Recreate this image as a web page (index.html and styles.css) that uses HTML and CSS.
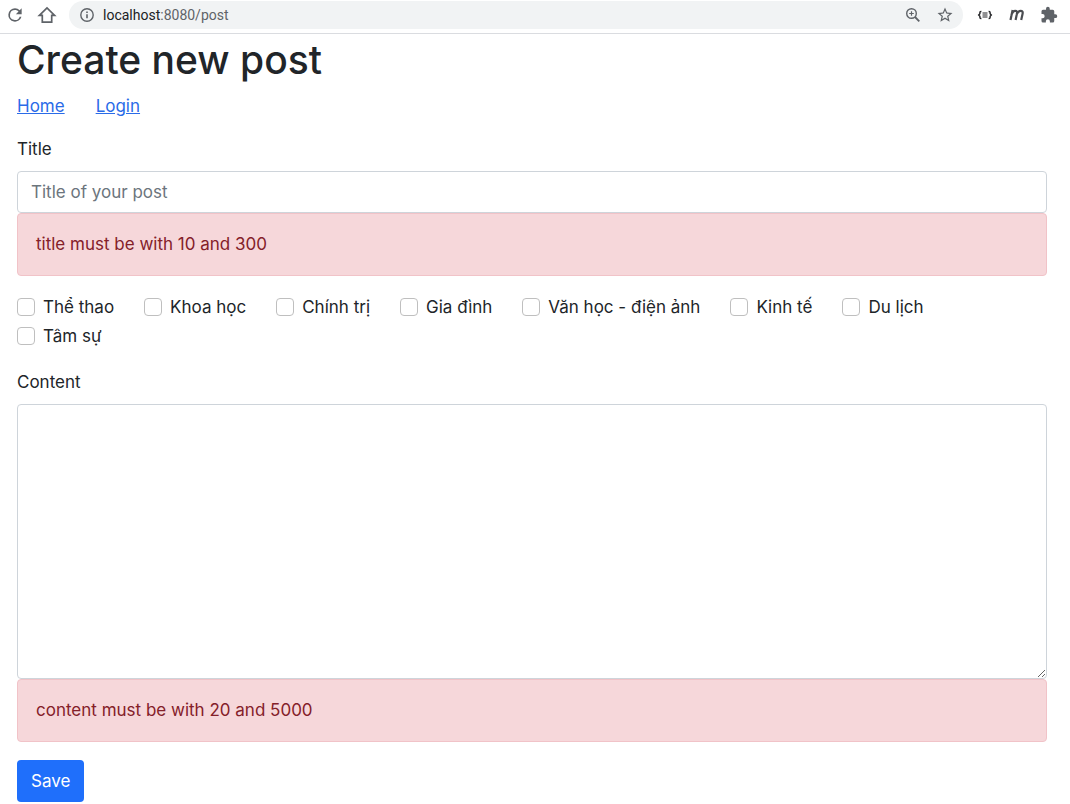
FILE: index.html
```html
<!DOCTYPE html>
<html lang="en">
<head>
<meta charset="utf-8">
<meta name="viewport" content="width=device-width, initial-scale=1">
<title>Create new post</title>
<link rel="stylesheet" href="styles.css">
</head>
<body>
<header class="toolbar">
  <button class="tool" type="button" aria-label="Reload">
    <svg width="20" height="20" viewBox="0 0 24 24" fill="#5f6368"><path d="M17.65 6.35A7.96 7.96 0 0 0 12 4a8 8 0 1 0 7.73 10h-2.08A6 6 0 1 1 12 6c1.66 0 3.14.69 4.22 1.78L13 11h7V4z"/></svg>
  </button>
  <button class="tool" type="button" aria-label="Home page">
    <svg width="20" height="20" viewBox="0 0 20 20" fill="none" stroke="#5f6368" stroke-width="1.7"><path d="M2.4 10.4 10 2.9l7.6 7.5h-2.9v6.7H5.3v-6.7z"/></svg>
  </button>
  <div class="address">
    <svg width="16" height="16" viewBox="0 0 16 16" fill="none" stroke="#5f6368" stroke-width="1.4"><circle cx="8" cy="8" r="6.2"/><path d="M8 7.2v4M8 4.5v1.4" stroke-width="1.6"/></svg>
    <span class="url">localhost<span class="url-path">:8080/post</span></span>
    <button class="tool" type="button" aria-label="Zoom">
      <svg width="18" height="18" viewBox="0 0 18 18" fill="none" stroke="#5f6368" stroke-width="1.4"><circle cx="7.5" cy="7.5" r="4.8"/><path d="m11 11 4.300 4.300" stroke-width="1.8"/><path d="M7.500 5.200v4.600M5.200 7.500h4.600" stroke-width="1.2"/></svg>
    </button>
    <button class="tool" type="button" aria-label="Bookmark this page">
      <svg width="18" height="18" viewBox="0 0 24 24" fill="#5f6368"><path d="m22 9.240-7.190-.62L12 2 9.190 8.630 2 9.240l5.460 4.730L5.820 21 12 17.270 18.180 21l-1.630-7.030zM12 15.400l-3.760 2.270 1-4.280-3.320-2.880 4.380-.38L12 6.100l1.710 4.040 4.380.38-3.320 2.880 1 4.280z"/></svg>
    </button>
  </div>
  <button class="tool" type="button" aria-label="JSON viewer">
    <svg width="16" height="16" viewBox="0 0 16 16" fill="none" stroke="#202124" stroke-width="1.4"><path d="M4.400 4.500H3.900Q2.900 4.500 2.900 5.500v1.300L1.700 8l1.200 1.200v1.300q0 1 1 1h.5M11.600 4.500h.5q1 0 1 1v1.300L14.300 8l-1.200 1.200v1.300q0 1-1 1h-.5"/><path d="M5.500 6h5M5.500 8h5M5.500 10h5" stroke-width="1"/></svg>
  </button>
  <button class="tool" type="button" aria-label="Extension m">
    <svg width="18" height="18" viewBox="0 0 18 18" fill="none" stroke="#4a4d51" stroke-width="2.200"><path d="M2.500 14 4.600 4M3.300 9.500C4.200 6.300 5.600 4.800 7.200 4.800c1.700 0 2.100 1.100 1.700 2.900L7.600 14M8.700 8.500c.9-2.500 2.200-3.700 3.900-3.700 1.800 0 2.400 1.100 2 2.900L13.200 14"/></svg>
  </button>
  <button class="tool" type="button" aria-label="Extensions">
    <svg width="18" height="18" viewBox="0 0 24 24" fill="#5f6368"><path d="M20.500 11H19V7a2 2 0 0 0-2-2h-4V3.500a2.500 2.500 0 0 0-5 0V5H4a2 2 0 0 0-2 2v3.800h1.500a2.700 2.700 0 0 1 0 5.400H2V20a2 2 0 0 0 2 2h3.800v-1.500a2.700 2.700 0 0 1 5.400 0V22H17a2 2 0 0 0 2-2v-4h1.500a2.500 2.500 0 0 0 0-5z"/></svg>
  </button>
</header>
<main class="page">
  <h1 class="heading">Create new post</h1>
  <nav class="nav"><a href="#home">Home</a><a href="#login">Login</a></nav>
  <form class="form">
    <div class="field">
      <label class="label" for="title">Title</label>
      <input class="control" id="title" type="text" placeholder="Title of your post">
      <div class="alert" role="alert">title must be with 10 and 300</div>
    </div>
    <div class="checks">
      <label class="check"><input type="checkbox">Thể thao</label>
      <label class="check"><input type="checkbox">Khoa học</label>
      <label class="check"><input type="checkbox">Chính trị</label>
      <label class="check"><input type="checkbox">Gia đình</label>
      <label class="check"><input type="checkbox">Văn học - điện ảnh</label>
      <label class="check"><input type="checkbox">Kinh tế</label>
      <label class="check"><input type="checkbox">Du lịch</label>
      <label class="check"><input type="checkbox">Tâm sự</label>
    </div>
    <div class="field">
      <label class="label" for="content">Content</label>
      <textarea class="control" id="content" rows="10"></textarea>
      <div class="alert" role="alert">content must be with 20 and 5000</div>
    </div>
    <button class="save" type="submit">Save</button>
  </form>
</main>
</body>
</html>
```
FILE: styles.css
```css
* {
  box-sizing: border-box;
}

body {
  margin: 0;
  background: #fff;
  color: #212529;
  font: 17px/26px Inter, "Liberation Sans", sans-serif;
}

.toolbar {
  display: flex;
  align-items: center;
  gap: 12px;
  padding: 1px 11px 4px 5px;
  border-bottom: 1px solid #dadce0;
}

.tool {
  display: flex;
  align-items: center;
  justify-content: center;
  width: 20px;
  height: 20px;
  padding: 0;
  border: 0;
  background: none;
}

.address {
  display: flex;
  flex: 1;
  align-items: center;
  gap: 12px;
  height: 28px;
  padding: 0 8px 0 10px;
  border-radius: 14px;
  background: #f1f3f4;
}

.url {
  flex: 1;
  margin-left: -4px;
  color: #202124;
  font: 14px/20px Roboto, sans-serif;
}

.url-path {
  color: #5f6368;
}

.page {
  padding: 0 23px 2px 17px;
}

.heading {
  margin: 0;
  padding-bottom: 7px;
  font-size: 39px;
  font-weight: 500;
  line-height: 52px;
}

.nav {
  display: flex;
  gap: 31px;
  margin-bottom: 17px;
}

.nav a {
  color: #2a6be8;
}

.field {
  display: flex;
  flex-direction: column;
  margin-bottom: 18px;
}

.label {
  align-self: flex-start;
  margin-bottom: 9px;
}

.control {
  display: block;
  width: 100%;
  padding: 7px 13px;
  border: 1px solid #ced4da;
  border-radius: 4px;
  background: #fff;
  color: inherit;
  font: inherit;
}

.control::placeholder {
  color: #6c757d;
  opacity: 1;
}

textarea.control {
  height: 275px;
  resize: vertical;
}

.alert {
  padding: 17px 18px 18px;
  border: 1px solid #f1c3c8;
  border-radius: 4px;
  background: #f6d7da;
  color: #842029;
}

.checks {
  display: flex;
  flex-wrap: wrap;
  row-gap: 3px;
  margin-bottom: 20px;
}

.check {
  display: flex;
  align-items: center;
  gap: 8px;
  margin-right: 30px;
}

.check input {
  width: 18px;
  height: 18px;
  margin: 0;
  border: 1px solid #bfbfbf;
  border-radius: 4px;
  background: #fff;
  appearance: none;
}

.check input:checked {
  border-color: #1f6ffb;
  background: #1f6ffb;
}

.save {
  padding: 8px 14px;
  border: 0;
  border-radius: 4px;
  background: #1f6ffb;
  color: #fff;
  font: inherit;
}
```
